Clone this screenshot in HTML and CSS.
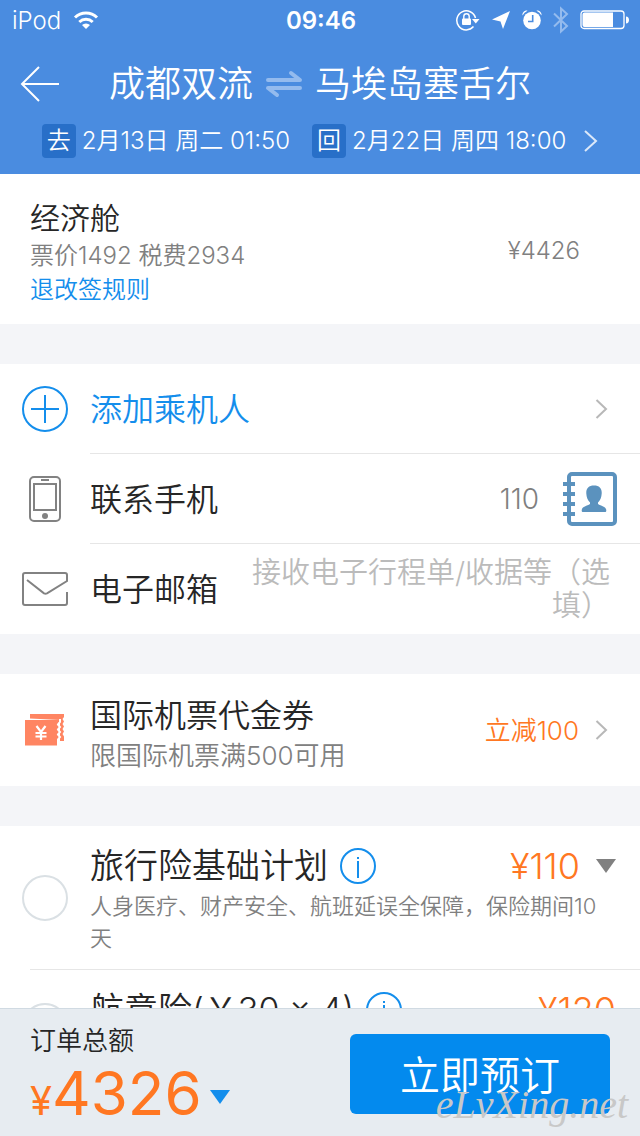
FILE: index.html
```html
<!DOCTYPE html>
<html lang="zh-CN">
<head>
<meta charset="utf-8">
<meta name="viewport" content="width=device-width, initial-scale=1">
<title>订单填写</title>
<link rel="stylesheet" href="styles.css">
</head>
<body>
<header class="header">
  <div class="status">
    <div class="status-left">
      <span>iPod</span>
      <svg width="26" height="20" viewBox="0 0 26 20" fill="none" stroke="#fff" stroke-width="3">
        <path d="M2 7.500a16 16 0 0 1 22 0"/><path d="M6.300 12a9.800 9.800 0 0 1 13.400 0"/><path d="M13 19l-4-4a5.800 5.800 0 0 1 8 0z" fill="#fff" stroke="none"/>
      </svg>
    </div>
    <strong class="status-time">09:46</strong>
    <div class="status-right">
      <svg width="24" height="22" viewBox="0 0 24 22">
        <path d="M17.500 17.600A9.500 9.500 0 1 1 19.500 9" fill="none" stroke="#fff" stroke-width="1.500"/>
        <path d="M16 10h7.500l-3.700 4.500z" fill="#fff"/>
        <rect x="6" y="9.500" width="9" height="6.500" rx="1" fill="#fff"/>
        <path d="M7.800 10V7.500a2.700 2.700 0 0 1 5.400 0V10" fill="none" stroke="#fff" stroke-width="1.400"/>
      </svg>
      <svg width="20" height="20" viewBox="0 0 20 20"><path d="M19 1L12 19 9.500 11.500 1 9.500z" fill="#fff"/></svg>
      <svg width="20" height="20" viewBox="0 0 20 20">
        <circle cx="10" cy="10.500" r="8.800" fill="#fff"/>
        <path d="M.5 5.500A10 10 0 0 1 5.500.7C3 0 0 2.500.5 5.500zM19.500 5.500A10 10 0 0 0 14.500.7C17 0 20 2.500 19.500 5.500z" fill="#fff"/>
        <path d="M10.700 5v6.500H6" fill="none" stroke="#4a8ce0" stroke-width="1.600"/>
      </svg>
      <svg width="16" height="28" viewBox="0 0 16 28" fill="none" stroke="#94bbee" stroke-width="2"><path d="M1 7.500l13 12.500-6 5.500V2.500L14 8 1 20.500"/></svg>
      <svg width="50" height="20" viewBox="0 0 50 20">
        <rect x="1" y="1" width="43" height="17.500" rx="3" fill="none" stroke="#fff" stroke-width="1.300"/>
        <path d="M2.500 4.500a2 2 0 0 1 2-2H33V17H4.500a2 2 0 0 1-2-2z" fill="#fff"/>
        <path d="M46 6.500c4 0 4 7 0 7z" fill="#fff"/>
      </svg>
    </div>
  </div>
  <div class="titlebar">
    <button class="back" aria-label="返回">
      <svg width="40" height="36" viewBox="0 0 40 36" fill="none" stroke="#fff" stroke-width="2"><path d="M19 1L2 18l17 17M2 18h37"/></svg>
    </button>
    <h1 class="route">
      <span>成都双流</span>
      <svg width="38" height="30" viewBox="0 0 38 30" fill="none" stroke="#94bbee" stroke-width="4" stroke-linecap="round" stroke-linejoin="round"><path d="M3 11h32L26 4M35 19H3l9 7"/></svg>
      <span>马埃岛塞舌尔</span>
    </h1>
  </div>
  <a class="dates" href="#flights">
    <span class="date"><span class="tag">去</span><span>2月13日 周二 01:50</span></span>
    <span class="date"><span class="tag">回</span><span>2月22日 周四 18:00</span></span>
    <svg width="14" height="24" viewBox="0 0 14 24" fill="none" stroke="#dbe8f9" stroke-width="2"><path d="M1 2l11 10L1 22"/></svg>
  </a>
</header>

<main class="content">
  <section class="fare">
    <div>
      <h2 class="fare-name">经济舱</h2>
      <p class="fare-detail">票价1492 税费2934</p>
      <a class="fare-rules" href="#rules">退改签规则</a>
    </div>
    <span class="fare-total">¥4426</span>
  </section>

  <section class="panel">
    <button class="row">
      <span class="icon">
        <svg width="46" height="46" viewBox="0 0 46 46" fill="none" stroke="#148eec" stroke-width="2"><circle cx="23" cy="23" r="22"/><path d="M9 23h28M23 9v28"/></svg>
      </span>
      <span class="line">
        <span class="label accent">添加乘机人</span>
        <svg class="chevron" width="13" height="20" viewBox="0 0 13 20"><path d="M1.500 1l9.500 9-9.500 9"/></svg>
      </span>
    </button>
    <div class="row">
      <span class="icon">
        <svg width="32" height="46" viewBox="0 0 32 46" fill="none" stroke="#828282" stroke-width="2"><rect x="1" y="1" width="30" height="44" rx="4"/><path d="M5 8h22v26H5zM12 4h8"/><circle cx="16" cy="40" r="3" fill="#828282" stroke="none"/></svg>
      </span>
      <div class="line line-phone">
        <label class="label" for="phone">联系手机</label>
        <input class="phone" id="phone" type="tel" value="110">
        <button class="contacts" aria-label="通讯录">
          <svg width="54" height="54" viewBox="0 0 54 54"><rect x="6" y="2" width="46" height="50" rx="3" fill="none" stroke="#5b92be" stroke-width="4"/><path d="M0 12h12M0 22h12M0 32h12M0 42h12" stroke="#5b92be" stroke-width="4"/><path d="M31 13.500c5.500 0 8 3 7.700 8-.2 4-1.500 7-3.700 9v1.500c3 2 8.300 2.500 8.300 6.500 0 1-.4 1.500-1.500 1.500H20.200c-1.100 0-1.500-.5-1.500-1.500 0-4 5.300-4.500 8.300-6.500v-1.500c-2.200-2-3.500-5-3.700-9-.3-5 2.200-8 7.700-8z" fill="#5b92be"/></svg>
        </button>
      </div>
    </div>
    <div class="row">
      <span class="icon">
        <svg width="46" height="34" viewBox="0 0 46 34" fill="none" stroke="#828282" stroke-width="2"><path d="M45 20v11a2 2 0 0 1-2 2H3a2 2 0 0 1-2-2V3a2 2 0 0 1 2-2h40a2 2 0 0 1 2 2v6L25 21.300q-1.500.7-3 0L5 8"/></svg>
      </span>
      <div class="line line-email">
        <label class="label" for="email">电子邮箱</label>
        <textarea class="email" id="email" rows="2" placeholder="接收电子行程单/收据等（选填）"></textarea>
      </div>
    </div>
  </section>

  <section class="panel">
    <a class="coupon" href="#coupon">
      <span class="icon">
        <svg width="40" height="34" viewBox="0 0 40 34">
          <path d="M5 1h34v3l-1.500 2L39 8.500 37.500 11l1.500 2.500-1.500 2.500 1.500 2.500-1.500 2.500 1.500 2.500V28h-4V7L5 5.500z" fill="#ff8562"/>
          <path d="M0 7h34v2l-2 2.500 2 2.500-2 2.500 2 2.500-2 2.500 2 2.500-2 2.500v6H0z" fill="#ff8562"/>
          <path d="M35 6v3l-2 2.500 2 2.500-2 2.500 2 2.500-2 2.500 2 2.500-2 2.500v2" fill="none" stroke="#fff" stroke-width="2"/>
          <path d="M11.500 13l4.500 6 4.500-6M16 19v8M10.500 20h11M10.500 23.500h11" fill="none" stroke="#fff" stroke-width="2.200"/>
        </svg>
      </span>
      <span class="coupon-text">
        <span class="label">国际机票代金券</span>
        <span class="coupon-note">限国际机票满500可用</span>
      </span>
      <span class="coupon-value">立减100</span>
      <svg class="chevron" width="13" height="20" viewBox="0 0 13 20"><path d="M1.500 1l9.500 9-9.500 9"/></svg>
    </a>
  </section>

  <section class="panel">
    <div class="plan">
      <span class="icon"><input class="check" type="checkbox" id="plan-travel"></span>
      <div class="plan-body">
        <div class="plan-head">
          <label for="plan-travel">旅行险基础计划</label>
          <button class="info" aria-label="说明"><svg width="36" height="36" viewBox="0 0 36 36" fill="none" stroke="#148eec" stroke-width="2"><circle cx="18" cy="18" r="17"/><path d="M18 9v2M18 13v17"/></svg></button>
          <span class="plan-price">¥110</span>
          <button class="expand" aria-label="选择份数"><svg width="20" height="14" viewBox="0 0 20 14"><path d="M0 0h20L10 14z" fill="#808080"/></svg></button>
        </div>
        <p class="plan-note">人身医疗、财产安全、航班延误全保障，保险期间10天</p>
      </div>
    </div>
    <hr class="divider">
    <div class="plan">
      <span class="icon"><input class="check" type="checkbox" id="plan-flight"></span>
      <div class="plan-body plan-short">
        <div class="plan-head">
          <label for="plan-flight">航意险(￥30 × 4)</label>
          <button class="info" aria-label="说明"><svg width="36" height="36" viewBox="0 0 36 36" fill="none" stroke="#148eec" stroke-width="2"><circle cx="18" cy="18" r="17"/><path d="M18 9v2M18 13v17"/></svg></button>
          <span class="plan-price">¥120</span>
        </div>
      </div>
    </div>
  </section>
</main>

<footer class="footer">
  <div class="summary">
    <span class="summary-label">订单总额</span>
    <button class="amount"><span class="currency">¥</span>4326<svg width="20" height="14" viewBox="0 0 20 14"><path d="M0 0h20L10 14z" fill="#148eec"/></svg></button>
  </div>
  <button class="book">立即预订</button>
  <span class="watermark">eLvXing.net</span>
</footer>
</body>
</html>
```

FILE: styles.css
```css
* { box-sizing: border-box; }

body {
  margin: 0;
  height: 100vh;
  display: flex;
  flex-direction: column;
  background: #f4f5f8;
  color: #262626;
  font-family: Inter, "Noto Sans CJK SC", sans-serif;
  font-weight: 350;
}

h1, h2, p { margin: 0; font-weight: inherit; }
svg { display: block; flex: none; }
a { color: inherit; text-decoration: none; }

button, input, textarea {
  margin: 0;
  padding: 0;
  border: 0;
  background: none;
  color: inherit;
  font: inherit;
}

/* Header */
.header {
  flex: none;
  background: #4a8ce0;
  color: #fff;
  padding-bottom: 16px;
}

.status {
  display: grid;
  grid-template-columns: 1fr auto 1fr;
  align-items: center;
  height: 40px;
  padding: 0 10px 0 12px;
  font-size: 24px;
}

.status-left { display: flex; align-items: center; gap: 12px; }
.status-time { font-weight: 600; }
.status-right { display: flex; align-items: center; justify-content: flex-end; gap: 11px; }

.titlebar {
  display: grid;
  grid-template-columns: 40px 1fr 40px;
  align-items: center;
  height: 84px;
  padding: 4px 20px 0;
}

.route {
  display: flex;
  align-items: center;
  justify-content: center;
  gap: 12px;
  font-size: 36px;
  line-height: 48px;
  white-space: nowrap;
}

.dates {
  display: flex;
  align-items: center;
  justify-content: center;
  gap: 22px;
  height: 34px;
  font-size: 24px;
  line-height: 34px;
  white-space: nowrap;
}

.date { display: flex; gap: 6px; }

.tag {
  width: 34px;
  height: 34px;
  border-radius: 4px;
  background: #286fc8;
  text-align: center;
}

.dates svg { margin-left: -4px; }

/* Scrolling content */
.content {
  flex: 1;
  min-height: 0;
  overflow-y: auto;
  scrollbar-width: none;
  display: flex;
  flex-direction: column;
  gap: 40px;
}

.content > section { flex: none; background: #fff; }

.fare {
  display: flex;
  align-items: center;
  justify-content: space-between;
  padding: 24px 60px 18px 30px;
  font-size: 24px;
  color: #808080;
}

.fare-name { font-size: 30px; line-height: 40px; color: #262626; }
.fare-detail { line-height: 36px; }
.fare-rules { display: block; line-height: 32px; color: #148eec; }
.fare-total { padding-bottom: 4px; }

.icon { display: flex; align-items: center; justify-content: center; width: 90px; flex: none; }
.row { display: flex; width: 100%; height: 90px; text-align: left; }

.line {
  flex: 1;
  min-width: 0;
  display: flex;
  align-items: center;
  justify-content: space-between;
  padding-right: 32px;
  border-bottom: 1px solid #e6e6e6;
}

.row:last-child .line { border-bottom: 0; }
.label { font-size: 32px; line-height: 40px; white-space: nowrap; }
.row .label { padding-top: 2px; }
.accent { color: #148eec; }
.chevron { fill: none; stroke: #b8b8b8; stroke-width: 2; }

.line-phone { gap: 24px; padding-right: 23px; }
.phone { flex: 1; min-width: 0; font-size: 28px; text-align: right; color: #808080; }

.line-email { gap: 24px; padding-right: 30px; }

.email {
  flex: 1;
  min-width: 0;
  height: 66px;
  font-size: 29px;
  line-height: 33px;
  text-align: right;
  resize: none;
  overflow: hidden;
}

.email::placeholder { color: #bbb; opacity: 1; }

.coupon { display: flex; align-items: center; padding-right: 32px; }
.coupon-text { flex: 1; display: flex; flex-direction: column; padding: 22px 0 10px; }
.coupon-note { font-size: 26px; line-height: 40px; color: #808080; }
.coupon-value { margin-right: 16px; padding-bottom: 4px; font-size: 26px; color: #ff7722; }

.plan { display: flex; align-items: center; }
.plan-body { flex: 1; min-width: 0; padding: 16px 24px 15px 0; }
.plan-short { padding-bottom: 48px; }
.plan-head { display: flex; align-items: center; height: 48px; gap: 12px; font-size: 34px; line-height: 48px; white-space: nowrap; }
.plan-price { margin-left: auto; font-size: 36px; color: #ff7722; }
.expand { margin-left: 4px; }
.plan-note { font-size: 22px; line-height: 32px; color: #808080; }

.check {
  appearance: none;
  width: 46px;
  height: 46px;
  border: 2px solid #dae0e4;
  border-radius: 50%;
}

.divider { margin: 0 0 0 30px; border: 0; border-top: 1px solid #e6e6e6; }

/* Order bar */
.footer {
  position: relative;
  flex: none;
  display: flex;
  align-items: flex-start;
  justify-content: space-between;
  height: 128px;
  padding: 0 30px;
  border-top: 1px solid #d0dae2;
  background: #e7ecf1;
}

.summary { padding-top: 16px; }
.summary-label { display: block; font-size: 26px; line-height: 32px; }

.amount {
  display: flex;
  align-items: baseline;
  font-size: 60px;
  font-weight: 400;
  line-height: 72px;
  color: #ff7722;
}

.amount svg { align-self: center; margin-left: 8px; }
.currency { font-size: 40px; }

.book {
  width: 260px;
  height: 80px;
  margin-top: 25px;
  padding-bottom: 2px;
  border-radius: 6px;
  background: #038aee;
  color: #fff;
  font-size: 40px;
}

.watermark {
  position: absolute;
  right: 12px;
  bottom: 8px;
  color: #c8c8c8;
  font: italic 40px/46px "Liberation Serif", serif;
  pointer-events: none;
}
```
